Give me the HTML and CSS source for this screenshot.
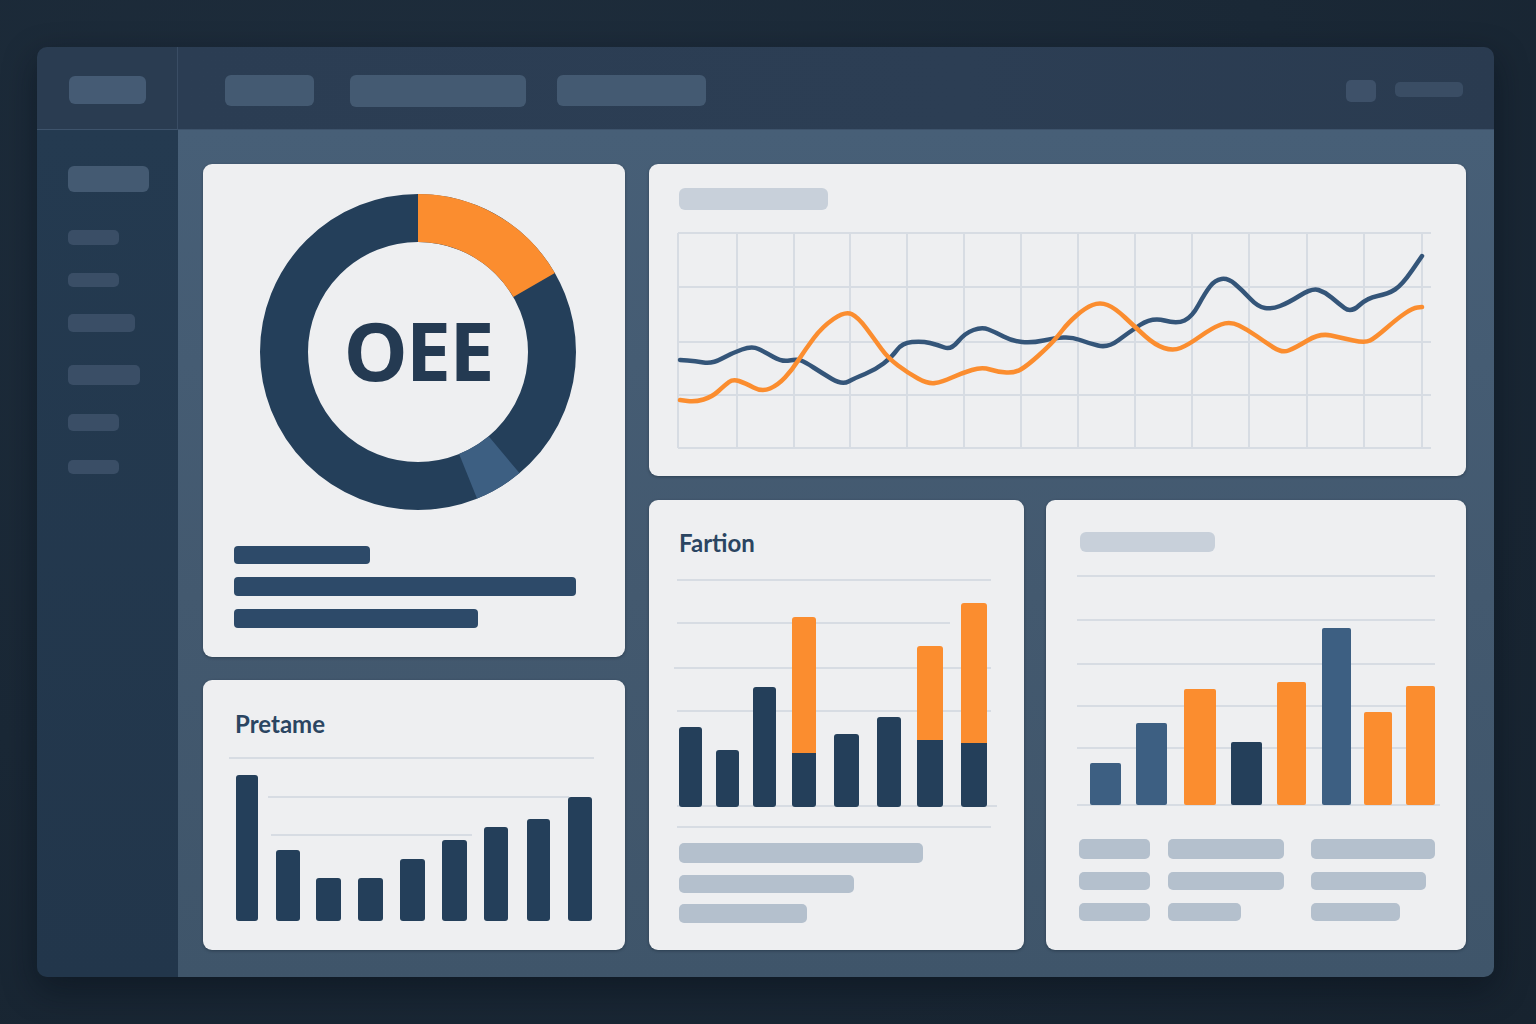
FILE: index.html
```html
<!DOCTYPE html>
<html lang="en">
<head>
<meta charset="utf-8">
<title>OEE Dashboard</title>
<link rel="stylesheet" href="styles.css">
</head>
<body>
<div class="window">
  <div class="brand"><span class="logo"></span></div>
  <header class="topbar">
    <nav class="nav">
      <span class="nav-item n1"></span>
      <span class="nav-item n2"></span>
      <span class="nav-item n3"></span>
    </nav>
    <div class="top-right">
      <span class="top-square"></span>
      <span class="top-pill"></span>
    </div>
  </header>
  <aside class="sidebar">
    <span class="side-item s1"></span>
    <span class="side-item s2"></span>
    <span class="side-item s3"></span>
    <span class="side-item s4"></span>
    <span class="side-item s5"></span>
    <span class="side-item s6"></span>
    <span class="side-item s7"></span>
  </aside>
  <main class="main">
    <div class="col-left">
      <section class="card oee">
        <div class="donut-wrap">
          <svg class="donut" width="330" height="330" viewBox="-165 -165 330 330">
            <circle r="134" fill="none" stroke="#243f5a" stroke-width="48"/>
            <circle r="134" fill="none" stroke="#fb8d2f" stroke-width="48" stroke-dasharray="140.3 1000" transform="rotate(-90)"/>
            <circle r="134" fill="none" stroke="#3d5f82" stroke-width="48" stroke-dasharray="42.1 1000" stroke-dashoffset="-327.4" transform="rotate(-90)"/>
          </svg>
          <div class="oee-label">OEE</div>
        </div>
        <div class="oee-lines">
          <span class="dbar b1"></span>
          <span class="dbar b2"></span>
          <span class="dbar b3"></span>
        </div>
      </section>
      <section class="card pretame">
        <h2 class="card-title">Pretame</h2>
        <svg class="pre-chart" width="372" height="175" viewBox="228 752 372 175">
          <g stroke="#d7dce3" stroke-width="2">
            <line x1="230" y1="758" x2="595" y2="758"/>
            <line x1="269" y1="797" x2="570" y2="797"/>
            <line x1="272" y1="835" x2="473" y2="835"/>
          </g>
          <g fill="#243f5a">
            <rect x="237" y="775" width="22" height="146" rx="3"/>
            <rect x="277" y="850" width="24" height="71" rx="3"/>
            <rect x="317" y="878" width="25" height="43" rx="3"/>
            <rect x="359" y="878" width="25" height="43" rx="3"/>
            <rect x="401" y="859" width="25" height="62" rx="3"/>
            <rect x="443" y="840" width="25" height="81" rx="3"/>
            <rect x="485" y="827" width="24" height="94" rx="3"/>
            <rect x="528" y="819" width="23" height="102" rx="3"/>
            <rect x="569" y="797" width="24" height="124" rx="3"/>
          </g>
        </svg>
      </section>
    </div>
    <div class="col-right">
      <section class="card trend">
        <span class="ph-title t1"></span>
        <svg class="trend-chart" width="770" height="232" viewBox="670 225 770 232">
          <g stroke="#d7dce3" stroke-width="2">
            <line x1="678" y1="233" x2="1431" y2="233"/>
            <line x1="678" y1="287" x2="1431" y2="287"/>
            <line x1="678" y1="342" x2="1431" y2="342"/>
            <line x1="678" y1="395" x2="1431" y2="395"/>
            <line x1="678" y1="448" x2="1431" y2="448"/>
            <line x1="678" y1="233" x2="678" y2="448"/>
            <line x1="737" y1="233" x2="737" y2="448"/>
            <line x1="794" y1="233" x2="794" y2="448"/>
            <line x1="850" y1="233" x2="850" y2="448"/>
            <line x1="907" y1="233" x2="907" y2="448"/>
            <line x1="964" y1="233" x2="964" y2="448"/>
            <line x1="1021" y1="233" x2="1021" y2="448"/>
            <line x1="1078" y1="233" x2="1078" y2="448"/>
            <line x1="1135" y1="233" x2="1135" y2="448"/>
            <line x1="1192" y1="233" x2="1192" y2="448"/>
            <line x1="1249" y1="233" x2="1249" y2="448"/>
            <line x1="1307" y1="233" x2="1307" y2="448"/>
            <line x1="1364" y1="233" x2="1364" y2="448"/>
            <line x1="1422" y1="233" x2="1422" y2="448"/>
          </g>
          <path fill="none" stroke="#345579" stroke-width="4.5" stroke-linejoin="round" stroke-linecap="round"
            d="M680,360 L687.5,360.5 Q695,361 703.5,362.5 Q712,364 722,358.5 Q732,353 742,349.5 Q752,346 758.5,349 Q765,352 773.5,357 Q782,362 789.5,360.5 Q797,359 801,360.5 Q805,362 813.5,367.5 Q822,373 832,379 Q842,385 848.5,381.5 Q855,378 865,374 Q875,370 883.5,363.5 Q892,357 897,350 Q902,343 912,342 Q922,341 930,343 Q938,345 944.5,347.5 Q951,350 958,341.5 Q965,333 973.5,330 Q982,327 988.5,329.5 Q995,332 1003.5,336.5 Q1012,341 1022,342 Q1032,343 1043.5,340.5 Q1055,338 1063.5,337.5 Q1072,337 1080,340 Q1088,343 1098,345.5 Q1108,348 1118,340.5 Q1128,333 1140,325 Q1152,317 1164.5,320.5 Q1177,324 1184.5,320.5 Q1192,317 1198.5,305 Q1205,293 1210,286.5 Q1215,280 1221.5,279 Q1228,278 1235,284 Q1242,290 1250,298.5 Q1258,307 1265,308 Q1272,309 1280,306 Q1288,303 1300,295.5 Q1312,288 1318.5,290 Q1325,292 1331.5,297.5 Q1338,303 1344.5,308 Q1351,313 1359,305.5 Q1367,298 1377.5,296 Q1388,294 1395,289.5 Q1402,285 1412,270.5 L1422,256"/>
          <path fill="none" stroke="#fb8d2f" stroke-width="4.5" stroke-linejoin="round" stroke-linecap="round"
            d="M680,400 L687.5,401 Q695,402 703.5,399.5 Q712,397 718.5,391 Q725,385 729,382 Q733,379 739,381 Q745,383 753.5,387.5 Q762,392 770,388.5 Q778,385 785,377.5 Q792,370 798.5,360 Q805,350 813.5,338.5 Q822,327 833.5,319 Q845,311 851.5,314 Q858,317 866.5,328.5 Q875,340 881.5,349 Q888,358 898,365.5 Q908,373 918,378.5 Q928,384 935,383 Q942,382 952,377.5 Q962,373 972,370 Q982,367 990,369.5 Q998,372 1006.5,372.5 Q1015,373 1021.5,369 Q1028,365 1038,356 Q1048,347 1053,341.5 Q1058,336 1063,329.5 Q1068,323 1076.5,315.5 Q1085,308 1092.5,305 Q1100,302 1107.5,305 Q1115,308 1125,317.5 Q1135,327 1145,336 Q1155,345 1164,348 Q1173,351 1180.5,348 Q1188,345 1200,336.5 Q1212,328 1221,324.5 Q1230,321 1239,325.5 Q1248,330 1256.5,336 Q1265,342 1273.5,347.5 Q1282,353 1288.5,350.5 Q1295,348 1307.5,340.5 Q1320,333 1331,335.5 Q1342,338 1353.5,340.5 Q1365,343 1370,340.5 Q1375,338 1386.5,328 Q1398,318 1405.5,313 Q1413,308 1417.5,307.5 L1422,307"/>
        </svg>
      </section>
      <div class="row-bottom">
        <section class="card fartion">
          <h2 class="card-title">Fartion</h2>
          <svg class="far-chart" width="330" height="257" viewBox="672 575 330 257">
            <g stroke="#d7dce3" stroke-width="2">
              <line x1="678" y1="580" x2="992" y2="580"/>
              <line x1="678" y1="623" x2="951" y2="623"/>
              <line x1="675" y1="668" x2="992" y2="668"/>
              <line x1="678" y1="711" x2="992" y2="711"/>
              <line x1="678" y1="806" x2="998" y2="806"/>
              <line x1="678" y1="827" x2="992" y2="827"/>
            </g>
            <g fill="#243f5a">
              <rect x="680" y="727" width="23" height="80" rx="3"/>
              <rect x="717" y="750" width="23" height="57" rx="3"/>
              <rect x="754" y="687" width="23" height="120" rx="3"/>
              <rect x="835" y="734" width="25" height="73" rx="3"/>
              <rect x="878" y="717" width="24" height="90" rx="3"/>
            </g>
            <g fill="#fb8d2f">
              <rect x="793" y="617" width="24" height="140" rx="3"/>
              <rect x="918" y="646" width="26" height="98" rx="3"/>
              <rect x="962" y="603" width="26" height="144" rx="3"/>
            </g>
            <g fill="#243f5a">
              <rect x="793" y="753" width="24" height="54" rx="3"/>
              <rect x="793" y="753" width="24" height="5"/>
              <rect x="918" y="740" width="26" height="67" rx="3"/>
              <rect x="918" y="740" width="26" height="5"/>
              <rect x="962" y="743" width="26" height="64" rx="3"/>
              <rect x="962" y="743" width="26" height="5"/>
            </g>
          </svg>
          <div class="far-lines">
            <span class="lbar f1"></span>
            <span class="lbar f2"></span>
            <span class="lbar f3"></span>
          </div>
        </section>
        <section class="card summary">
          <span class="ph-title t2"></span>
          <svg class="sum-chart" width="375" height="240" viewBox="1070 570 375 240">
            <g stroke="#d7dce3" stroke-width="2">
              <line x1="1077" y1="576" x2="1435" y2="576"/>
              <line x1="1077" y1="620" x2="1435" y2="620"/>
              <line x1="1077" y1="664" x2="1435" y2="664"/>
              <line x1="1077" y1="706" x2="1435" y2="706"/>
              <line x1="1077" y1="748" x2="1435" y2="748"/>
              <line x1="1077" y1="805" x2="1440" y2="805"/>
            </g>
            <rect x="1090" y="763" width="31" height="42" rx="2" fill="#3d5f82"/>
            <rect x="1136" y="723" width="31" height="82" rx="2" fill="#3d5f82"/>
            <rect x="1184" y="689" width="32" height="116" rx="2" fill="#fb8d2f"/>
            <rect x="1231" y="742" width="31" height="63" rx="2" fill="#243f5a"/>
            <rect x="1277" y="682" width="29" height="123" rx="2" fill="#fb8d2f"/>
            <rect x="1322" y="628" width="29" height="177" rx="2" fill="#3d5f82"/>
            <rect x="1364" y="712" width="28" height="93" rx="2" fill="#fb8d2f"/>
            <rect x="1406" y="686" width="29" height="119" rx="2" fill="#fb8d2f"/>
          </svg>
          <div class="sum-grid">
            <span class="lbar g-a"></span>
            <span class="lbar g-b"></span>
            <span class="lbar g-c"></span>
            <span class="lbar g-a r2"></span>
            <span class="lbar g-b r2"></span>
            <span class="lbar g-d r2"></span>
            <span class="lbar g-a r2"></span>
            <span class="lbar g-e r2"></span>
            <span class="lbar g-f r2"></span>
          </div>
        </section>
      </div>
    </div>
  </main>
</div>
</body>
</html>
```

FILE: styles.css
```css
* {
  box-sizing: border-box;
}

html, body {
  margin: 0;
  width: 1536px;
  height: 1024px;
  overflow: hidden;
}

body {
  background: radial-gradient(ellipse at 30% 20%, #1e2d3c 0%, #1a2836 55%, #17232f 100%);
  padding: 47px 0 0 37px;
  font-family: "Lato", "Open Sans", "Liberation Sans", sans-serif;
}

.window {
  width: 1457px;
  height: 930px;
  border-radius: 10px;
  overflow: hidden;
  display: grid;
  grid-template-columns: 141px 1fr;
  grid-template-rows: 83px 1fr;
  box-shadow: 0 12px 34px rgba(5, 12, 20, 0.45);
}

/* ---------- top bar ---------- */
.brand {
  background: #2a3c51;
  border-right: 1px solid #3a4d64;
  border-bottom: 1px solid #3e536b;
  display: flex;
  justify-content: center;
  align-items: flex-start;
  padding-top: 29px;
}

.logo {
  display: block;
  width: 77px;
  height: 28px;
  border-radius: 6px;
  background: #455b74;
}

.topbar {
  background: linear-gradient(90deg, #2b3d53 0%, #2c3e54 60%, #2a3b50 100%);
  border-bottom: 1px solid #3e536b;
  display: flex;
  align-items: center;
  justify-content: space-between;
  padding: 5px 31px 0 47px;
}

.nav {
  display: flex;
  align-items: center;
}

.nav-item {
  display: block;
  background: #445a72;
  border-radius: 6px;
}

.n1 { width: 89px; height: 31px; }
.n2 { width: 176px; height: 32px; margin-left: 36px; }
.n3 { width: 149px; height: 31px; margin-left: 31px; }

.top-right {
  display: flex;
  align-items: center;
  gap: 19px;
}

.top-square {
  display: block;
  width: 30px;
  height: 22px;
  border-radius: 5px;
  background: #3e5169;
}

.top-pill {
  display: block;
  width: 68px;
  height: 15px;
  border-radius: 5px;
  background: #3a4d64;
  margin-top: -3px;
}

/* ---------- sidebar ---------- */
.sidebar {
  background: linear-gradient(180deg, #243a50 0%, #22364b 100%);
  display: flex;
  flex-direction: column;
  align-items: flex-start;
  padding: 36px 0 0 31px;
}

.side-item {
  display: block;
  background: #3a4e66;
  border-radius: 5px;
}

.s1 { width: 81px; height: 26px; background: #445a72; border-radius: 6px; }
.s2 { width: 51px; height: 15px; margin-top: 38px; }
.s3 { width: 51px; height: 14px; margin-top: 28px; }
.s4 { width: 67px; height: 18px; margin-top: 27px; }
.s5 { width: 72px; height: 20px; margin-top: 33px; }
.s6 { width: 51px; height: 17px; margin-top: 29px; }
.s7 { width: 51px; height: 14px; margin-top: 29px; }

/* ---------- main ---------- */
.main {
  background: linear-gradient(180deg, #475f77 0%, #43596f 55%, #3f556a 100%);
  padding: 34px 28px 27px 25px;
  display: flex;
  gap: 24px;
}

.col-left {
  width: 422px;
  display: flex;
  flex-direction: column;
  gap: 23px;
}

.col-right {
  flex: 1;
  display: flex;
  flex-direction: column;
  gap: 24px;
}

.row-bottom {
  flex: 1;
  display: flex;
  gap: 22px;
}

.card {
  background: #eeeff1;
  border-radius: 9px;
  box-shadow: 0 1px 3px rgba(10, 20, 32, 0.35);
}

svg {
  display: block;
}

.card-title {
  margin: 0;
  font-family: "Lato", "Open Sans", sans-serif;
  font-weight: 700;
  font-size: 24px;
  line-height: 30px;
  color: #2b4561;
}

.ph-title {
  display: block;
  background: #c8d0da;
  border-radius: 6px;
}

.dbar {
  display: block;
  background: #2d4a69;
  border-radius: 4px;
}

.lbar {
  display: block;
  background: #b4c0cd;
  border-radius: 5px;
}

/* OEE card */
.oee {
  height: 493px;
  padding-top: 23px;
}

.donut-wrap {
  display: grid;
  width: 330px;
  height: 330px;
  margin-left: 50px;
}

.donut-wrap > * {
  grid-area: 1 / 1;
}

.oee-label {
  place-self: center;
  font-family: "Open Sans", "Liberation Sans", sans-serif;
  font-weight: 700;
  font-size: 81px;
  line-height: 1;
  letter-spacing: -2px;
  color: #243a52;
  padding-bottom: 5px;
}

.oee-lines {
  margin: 29px 0 0 31px;
  display: flex;
  flex-direction: column;
  align-items: flex-start;
}

.b1 { width: 136px; height: 18px; }
.b2 { width: 342px; height: 19px; margin-top: 13px; }
.b3 { width: 244px; height: 19px; margin-top: 13px; }

/* Pretame card */
.pretame {
  flex: 1;
  padding-top: 29px;
}

.pretame .card-title {
  margin-left: 32px;
}

.pre-chart {
  margin: 13px 0 0 24px;
}

/* trend card */
.trend {
  height: 312px;
  padding-top: 24px;
}

.t1 {
  width: 149px;
  height: 22px;
  margin-left: 30px;
}

.trend-chart {
  margin: 15px 0 0 21px;
}

/* Fartion card */
.fartion {
  width: 375px;
  padding-top: 28px;
}

.fartion .card-title {
  margin-left: 30px;
}

.far-chart {
  margin: 17px 0 0 22px;
}

.far-lines {
  margin: 11px 0 0 30px;
  display: flex;
  flex-direction: column;
  align-items: flex-start;
}

.f1 { width: 244px; height: 20px; }
.f2 { width: 175px; height: 18px; margin-top: 12px; }
.f3 { width: 128px; height: 19px; margin-top: 11px; }

/* summary card */
.summary {
  flex: 1;
  padding-top: 32px;
}

.t2 {
  width: 135px;
  height: 20px;
  margin-left: 34px;
}

.sum-chart {
  margin: 18px 0 0 24px;
}

.sum-grid {
  margin: 29px 0 0 33px;
  display: grid;
  grid-template-columns: 89px 143px 124px;
  row-gap: 13px;
}

.sum-grid .lbar { height: 20px; }
.sum-grid .r2 { height: 18px; }

.g-a { width: 71px; }
.g-b { width: 116px; }
.g-c { width: 124px; }
.g-d { width: 115px; }
.g-e { width: 73px; }
.g-f { width: 89px; }
```
